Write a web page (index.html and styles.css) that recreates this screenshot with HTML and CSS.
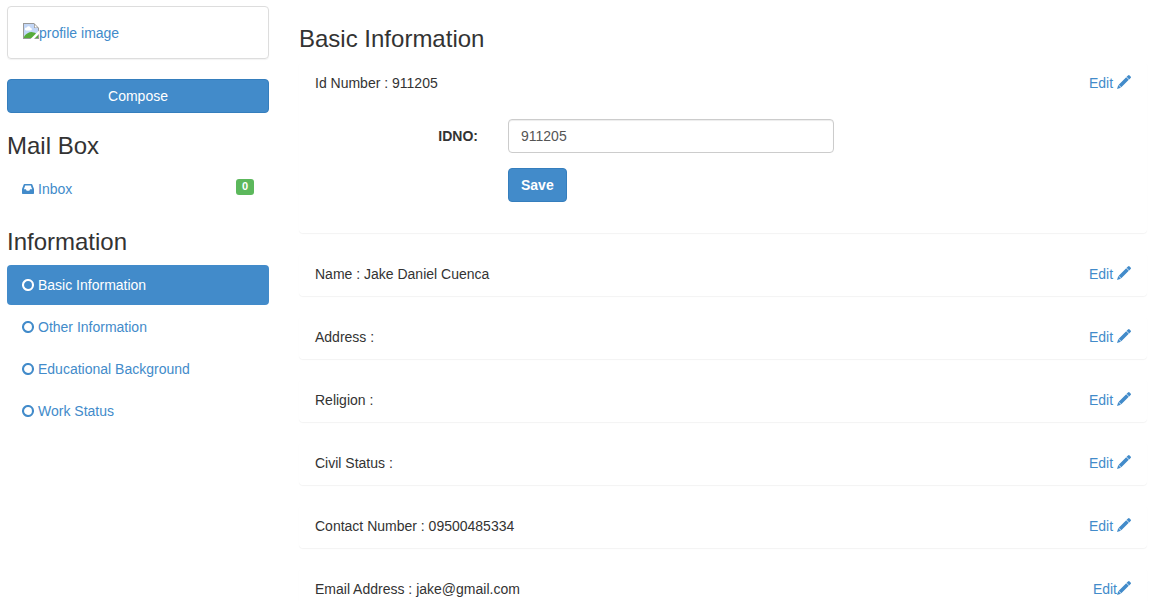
FILE: index.html
```html
<!DOCTYPE html>
<html lang="en">
<head>
    <meta charset="UTF-8">
    <meta name="viewport" content="width=device-width, initial-scale=1.0">
    <title>Basic Information</title>
    <link rel="stylesheet" href="styles.css">
</head>
<body>
    <!-- shared icons -->
    <svg class="icon-defs" aria-hidden="true">
        <symbol id="icon-circle" viewBox="0 0 12 12">
            <circle cx="6" cy="6" r="5" fill="none" stroke="currentColor" stroke-width="2.1"/>
        </symbol>
        <symbol id="icon-inbox" viewBox="0 0 12 12">
            <path fill-rule="evenodd" d="M2.500 1h7q.6 0 .8.500L12 6v4.300q0 .7-.7.700H.7q-.7 0-.7-.7V6l1.700-4.500q.2-.5.800-.5zM3.200 2.400L1.900 6.300h2l.8 1.500h2.600l.8-1.500h2L8.800 2.400z"/>
        </symbol>
        <symbol id="icon-pencil" viewBox="0 0 14 14">
            <path d="M9.600 1.800L11 .4q.8-.8 1.600 0l1 1q.8.800 0 1.600l-1.400 1.400zM9.200 2.200l2.600 2.600-7.500 7.500-2.600-2.600zM1.300 10.100l2.600 2.600L0 14z"/>
        </symbol>
    </svg>

    <div class="container">
        <div class="sidebar">
            <div class="thumbnail">
                <a href="#">
                    <svg class="image-icon" viewBox="0 0 16 16" aria-hidden="true">
                        <path d="M0 0h11l5 5v11H0z" fill="#999"/>
                        <path d="M1 1h10v4h4v10H1z" fill="#c3d7f7"/>
                        <path d="M3 7.500a1.500 1.500 0 0 1 .8-3 2 2 0 0 1 3.800.4 1.300 1.300 0 0 1 0 2.600z" fill="#fff"/>
                        <path d="M1 15v-1.500Q4.500 9 8.500 9q3.500 0 6.500 3v3z" fill="#56ab3a"/>
                        <path d="M11.800 1.800V4.500h2.700z" fill="#fff"/>
                        <path d="M16 7.500L7.500 16H11l5-5z" fill="#fff"/>
                    </svg><span>profile image</span>
                </a>
            </div>

            <button type="button" class="btn btn-block">Compose</button>

            <h3>Mail Box</h3>
            <ul class="nav">
                <li>
                    <a href="#"><svg class="icon"><use href="#icon-inbox"/></svg>Inbox <span class="label">0</span></a>
                </li>
            </ul>

            <h3>Information</h3>
            <ul class="nav">
                <li><a class="active" href="#"><svg class="icon"><use href="#icon-circle"/></svg>Basic Information</a></li>
                <li><a href="#"><svg class="icon"><use href="#icon-circle"/></svg>Other Information</a></li>
                <li><a href="#"><svg class="icon"><use href="#icon-circle"/></svg>Educational Background</a></li>
                <li><a href="#"><svg class="icon"><use href="#icon-circle"/></svg>Work Status</a></li>
            </ul>
        </div>

        <div class="content">
            <h3>Basic Information</h3>

            <div class="panel">
                <div class="panel-heading">
                    <span>Id Number : 911205</span>
                    <a href="#">Edit <svg class="pencil"><use href="#icon-pencil"/></svg></a>
                </div>
                <form class="panel-body">
                    <label for="idno">IDNO:</label>
                    <input type="text" id="idno" class="form-control" value="911205">
                    <button type="submit" class="btn btn-save">Save</button>
                </form>
            </div>

            <div class="panel">
                <div class="panel-heading">
                    <span>Name : Jake Daniel Cuenca</span>
                    <a href="#">Edit <svg class="pencil"><use href="#icon-pencil"/></svg></a>
                </div>
            </div>

            <div class="panel">
                <div class="panel-heading">
                    <span>Address :</span>
                    <a href="#">Edit <svg class="pencil"><use href="#icon-pencil"/></svg></a>
                </div>
            </div>

            <div class="panel">
                <div class="panel-heading">
                    <span>Religion :</span>
                    <a href="#">Edit <svg class="pencil"><use href="#icon-pencil"/></svg></a>
                </div>
            </div>

            <div class="panel">
                <div class="panel-heading">
                    <span>Civil Status :</span>
                    <a href="#">Edit <svg class="pencil"><use href="#icon-pencil"/></svg></a>
                </div>
            </div>

            <div class="panel">
                <div class="panel-heading">
                    <span>Contact Number : 09500485334</span>
                    <a href="#">Edit <svg class="pencil"><use href="#icon-pencil"/></svg></a>
                </div>
            </div>

            <div class="panel">
                <div class="panel-heading">
                    <span>Email Address : jake@gmail.com</span>
                    <a href="#">Edit<svg class="pencil"><use href="#icon-pencil"/></svg></a>
                </div>
            </div>
        </div>
    </div>
</body>
</html>
```
FILE: styles.css
```css
:root {
    --primary: #428bca;
    --primary-border: #357ebd;
    --success: #5cb85c;
    --text: #333;
}

* {
    box-sizing: border-box;
}

body {
    margin: 0;
    padding: 6px 10px 0 7px;
    font-family: "Liberation Sans", Arial, sans-serif;
    font-size: 14px;
    line-height: 20px;
    color: var(--text);
    background-color: #fff;
}

a {
    color: var(--primary);
    text-decoration: none;
}

h3 {
    margin: 20px 0 10px;
    font-size: 24px;
    font-weight: 500;
    line-height: 26px;
}

.icon-defs {
    display: none;
}

.container {
    display: grid;
    grid-template-columns: 262fr 848fr;
    gap: 30px;
}

/* Sidebar */
.thumbnail {
    margin-bottom: 20px;
    padding: 16px 15px 15px;
    border: 1px solid #ddd;
    border-radius: 4px;
    box-shadow: 0 1px 1px rgba(0, 0, 0, 0.05);
}

.thumbnail a {
    display: flex;
}

.image-icon {
    width: 16px;
    height: 16px;
}

.nav {
    display: grid;
    gap: 2px;
    margin: 0;
    padding: 0;
    list-style: none;
}

.nav a {
    display: flex;
    align-items: center;
    padding: 10px 15px;
    border-radius: 4px;
}

.nav .active {
    color: #fff;
    background-color: var(--primary);
}

.icon {
    width: 12px;
    height: 12px;
    margin-right: 4px;
    fill: currentColor;
}

.label {
    align-self: flex-start;
    margin-left: auto;
    padding: 2px 6px 3px;
    border-radius: 3px;
    font-size: 11px;
    font-weight: bold;
    line-height: 11px;
    color: #fff;
    background-color: var(--success);
}

.btn {
    padding: 6px 12px;
    border: 1px solid var(--primary-border);
    border-radius: 4px;
    font: inherit;
    color: #fff;
    background-color: var(--primary);
    cursor: pointer;
}

.btn-block {
    display: block;
    width: 100%;
}

/* Panels */
.panel {
    margin-bottom: 20px;
    border: 1px solid transparent;
    border-radius: 4px;
    box-shadow: 0 1px 1px rgba(0, 0, 0, 0.05);
}

.panel-heading {
    display: flex;
    justify-content: space-between;
    padding: 10px 15px;
    line-height: 21px;
}

.pencil {
    width: 14px;
    height: 14px;
    fill: currentColor;
    vertical-align: -1px;
}

.panel-body {
    display: grid;
    grid-template-columns: 163fr 326fr 267fr;
    gap: 15px 30px;
    padding: 15px 15px 30px;
}

.panel-body label {
    padding-top: 7px;
    font-weight: bold;
    text-align: right;
}

.form-control {
    width: 100%;
    height: 34px;
    padding: 6px 12px;
    border: 1px solid #ccc;
    border-radius: 4px;
    font: inherit;
    color: #555;
    box-shadow: inset 0 1px 1px rgba(0, 0, 0, 0.075);
}

.btn-save {
    grid-column: 2;
    justify-self: start;
    font-weight: bold;
}
```
